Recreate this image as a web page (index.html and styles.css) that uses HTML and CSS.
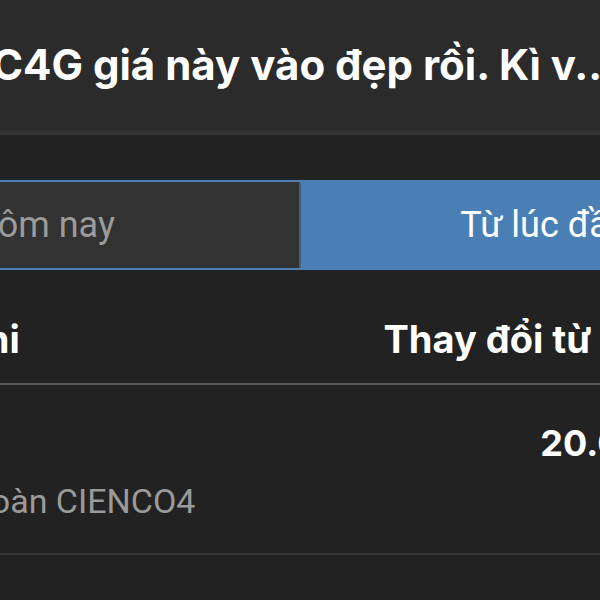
FILE: index.html
```html
<!DOCTYPE html>
<html lang="vi">
<head>
    <meta charset="UTF-8">
    <meta name="viewport" content="width=device-width, initial-scale=1.0">
    <title>C4G</title>
    <link rel="stylesheet" href="styles.css">
</head>
<body>
    <div class="page">
        <div class="header">
            <h1 class="title">C4G giá này vào đẹp rồi. Kì v...</h1>
        </div>

        <div class="segmented">
            <div class="seg seg-off">Hôm nay</div>
            <div class="seg seg-on">Từ lúc đầu</div>
        </div>

        <!-- table -->
        <div class="table-head">
            <span class="col-name">Khoản chi</span>
            <span class="col-change">Thay đổi từ đầu</span>
        </div>
        <div class="row">
            <div class="row-left">
                <div class="ticker">C4G</div>
                <div class="company">Tập đoàn CIENCO4</div>
            </div>
            <div class="row-right">
                <div class="value">20.000</div>
            </div>
        </div>
    </div>
</body>
</html>
```

FILE: styles.css
```css
body {
    margin: 0;
    background-color: #222222;
    color: #fff;
    font-family: Roboto, "Noto Sans", sans-serif;
    overflow: hidden;
}
.page {
    width: 1030px;
    margin-left: -214px;
}
.header {
    height: 135px;
    background: #2b2b2b;
    border-bottom: 4px solid #343434;
    box-sizing: border-box;
    padding: 40px 0 0 206px;
}
.title {
    margin: 0;
    font-family: Inter, Roboto, sans-serif;
    font-size: 42px;
    font-weight: 700;
    line-height: 50px;
    white-space: nowrap;
}
.segmented {
    display: flex;
    margin-top: 45px;
    height: 90px;
    box-sizing: border-box;
    border: 2px solid #4a7fb5;
    background: #4a7fb5;
}
.seg {
    flex: 0 0 50%;
    box-sizing: border-box;
    display: flex;
    align-items: center;
    justify-content: center;
    font-size: 36px;
}
.seg-off {
    background: #323232;
    color: #9b9b9b;
    border-right: 2px solid #3f5f80;
}
.seg-on {
    color: #fff;
    padding-right: 26px;
}
.table-head {
    display: flex;
    justify-content: space-between;
    padding: 46px 146px 21px 48px;
    border-bottom: 2px solid #5b5b5b;
    font-family: Inter, Roboto, sans-serif;
    font-size: 38px;
    font-weight: 700;
}
.row {
    display: flex;
    justify-content: space-between;
    padding: 36px 146px 32px 120px;
    border-bottom: 2px solid #383838;
}
.ticker {
    font-family: Inter, Roboto, sans-serif;
    font-size: 36px;
    font-weight: 700;
}
.company {
    margin-top: 16px;
    font-size: 34px;
    color: #9a9a9a;
}
.value {
    font-family: Inter, Roboto, sans-serif;
    font-size: 36px;
    font-weight: 700;
}
```
